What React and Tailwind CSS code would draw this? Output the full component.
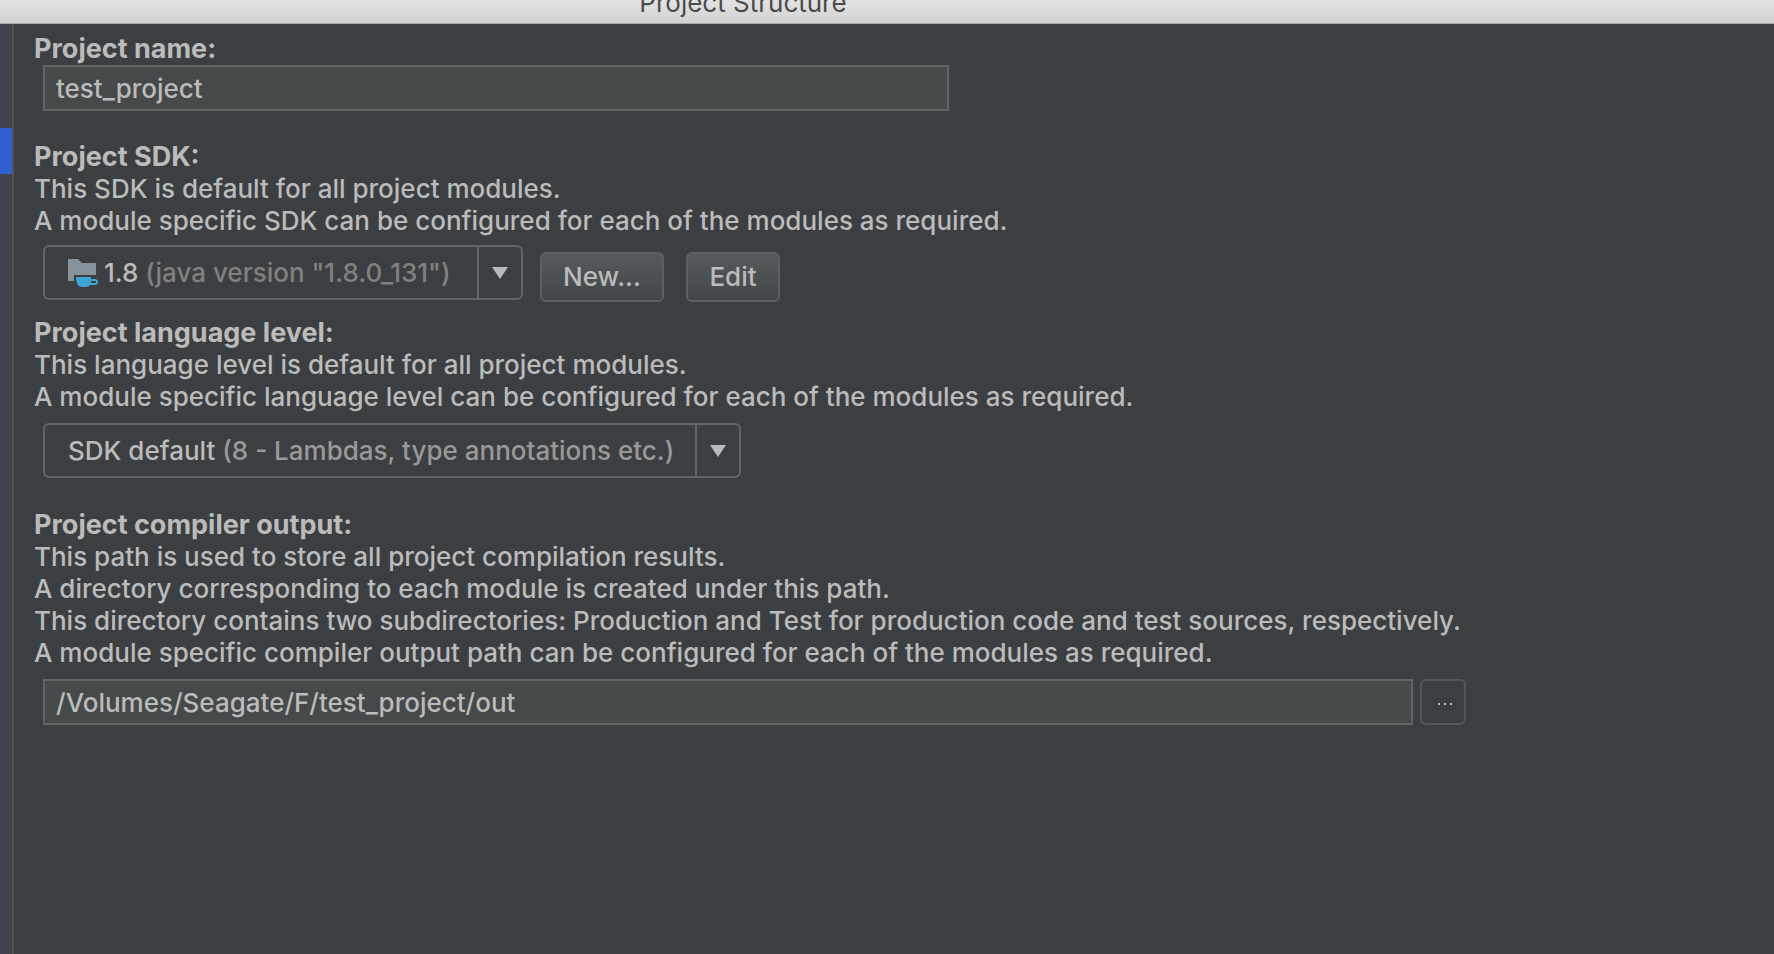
import React, { useState } from 'react';

const JdkIcon = () => (
  <svg width="30" height="28" viewBox="0 0 30 28" className="shrink-0" aria-hidden="true">
    <path d="M0 0h10l4 4h14v12H6v6H0z" fill="#87939a" />
    <path
      d="M8 18h15v2h5l2 2v2l-2 2h-6c-1 1-2 2-4 2h-4c-4 0-6-4-6-10zm15 4v2h5v-2z"
      fill="#3ca5d5"
      fillRule="evenodd"
    />
  </svg>
);

const Section = ({ title, lines = [], htmlFor, className = '', children }) => (
  <section className={className}>
    <label htmlFor={htmlFor} className="block text-[27px] leading-8 font-bold">{title}</label>
    {lines.map(line => (
      <p key={line}>{line}</p>
    ))}
    {children}
  </section>
);

// The native select sits transparent on top, so the value can carry two colours
const ComboBox = ({ id, value, hint, hintClass, icon, className }) => (
  <div className={`relative flex h-[55px] rounded-md border-2 border-[#646464] ${className}`}>
    <div className="flex min-w-0 flex-1 items-center overflow-hidden whitespace-nowrap pl-[23px]" aria-hidden="true">
      {icon}
      <span className="whitespace-pre">{value} <span className={hintClass}>{hint}</span></span>
    </div>
    <div className="flex w-11 shrink-0 items-center justify-center border-l-2 border-[#646464]">
      <svg width="16" height="12" viewBox="0 0 16 12" aria-hidden="true">
        <path d="M0 0h16L8 12z" fill="#bbbbbb" />
      </svg>
    </div>
    <select id={id} className="absolute inset-0 h-full w-full cursor-pointer opacity-0">
      <option>{`${value} ${hint}`}</option>
    </select>
  </div>
);

const inputClass = 'h-[46px] min-w-0 border-2 border-[#646464] bg-[#45494a] px-[11px] outline-none';
const buttonClass =
  'h-[50px] rounded-md border-2 border-[#5e6060] bg-linear-to-b from-[#555a5c] to-[#414648] text-center';

const App = () => {
  const [name, setName] = useState('test_project');
  const [output, setOutput] = useState('/Volumes/Seagate/F/test_project/out');

  return (
    <div className="flex min-h-screen flex-col overflow-hidden bg-[#3c3f41] font-['Inter',sans-serif] text-[26px] leading-8 font-medium text-[#bbbbbb]">
      <header className="flex h-6 items-end overflow-hidden border-b border-[#a9a9a9] bg-linear-to-b from-[#e3e3e3] to-[#d2d2d2] pb-1">
        <h1 className="w-[1486px] max-w-full text-center font-normal text-[#4b4b4b]">Project Structure</h1>
      </header>

      <div className="flex flex-1">
        <aside className="w-[14px] shrink-0 border-r-2 border-[#555152] bg-[#40444f] pt-[104px]">
          <div className="h-[46px] bg-[#2f5fd0]" />
        </aside>

        <main className="min-w-0 flex-1 pl-5 pr-5 pt-[9px]">
          <Section title="Project name:" htmlFor="name">
            <div className="flex pl-[9px]">
              <input
                id="name"
                className={`${inputClass} w-[906px] max-w-full`}
                value={name}
                onChange={e => setName(e.target.value)}
              />
            </div>
          </Section>

          <Section
            className="mt-[30px]"
            title="Project SDK:"
            htmlFor="sdk"
            lines={[
              'This SDK is default for all project modules.',
              'A module specific SDK can be configured for each of the modules as required.',
            ]}
          >
            <div className="mt-2 flex items-start pl-[9px]">
              <ComboBox
                id="sdk"
                value="1.8"
                hint={'(java version "1.8.0_131")'}
                hintClass="text-[#808080]"
                icon={<span className="mr-1.5"><JdkIcon /></span>}
                className="w-[480px]"
              />
              <button className={`${buttonClass} ml-[17px] mt-[7px] w-[124px]`}>New...</button>
              <button className={`${buttonClass} ml-[22px] mt-[7px] w-[94px]`}>Edit</button>
            </div>
          </Section>

          <Section
            className="mt-[15px]"
            title="Project language level:"
            htmlFor="level"
            lines={[
              'This language level is default for all project modules.',
              'A module specific language level can be configured for each of the modules as required.',
            ]}
          >
            <div className="mt-2.5 flex pl-[9px]">
              <ComboBox
                id="level"
                value="SDK default"
                hint="(8 - Lambdas, type annotations etc.)"
                hintClass="text-[#999999]"
                className="w-[698px]"
              />
            </div>
          </Section>

          <Section
            className="mt-[31px]"
            title="Project compiler output:"
            htmlFor="output"
            lines={[
              'This path is used to store all project compilation results.',
              'A directory corresponding to each module is created under this path.',
              'This directory contains two subdirectories: Production and Test for production code and test sources, respectively.',
              'A module specific compiler output path can be configured for each of the modules as required.',
            ]}
          >
            <div className="mt-2.5 flex max-w-[1432px] gap-[7px] pl-[9px]">
              <input
                id="output"
                className={`${inputClass} flex-1`}
                value={output}
                onChange={e => setOutput(e.target.value)}
              />
              <button
                aria-label="Browse"
                className="flex h-[46px] w-[46px] items-center justify-center gap-1 rounded-md border-2 border-[#555758] pl-1 pt-1"
              >
                <i className="size-0.5 bg-[#bbbbbb]" />
                <i className="size-0.5 bg-[#bbbbbb]" />
                <i className="size-0.5 bg-[#bbbbbb]" />
              </button>
            </div>
          </Section>
        </main>
      </div>
    </div>
  );
};

export default App;
